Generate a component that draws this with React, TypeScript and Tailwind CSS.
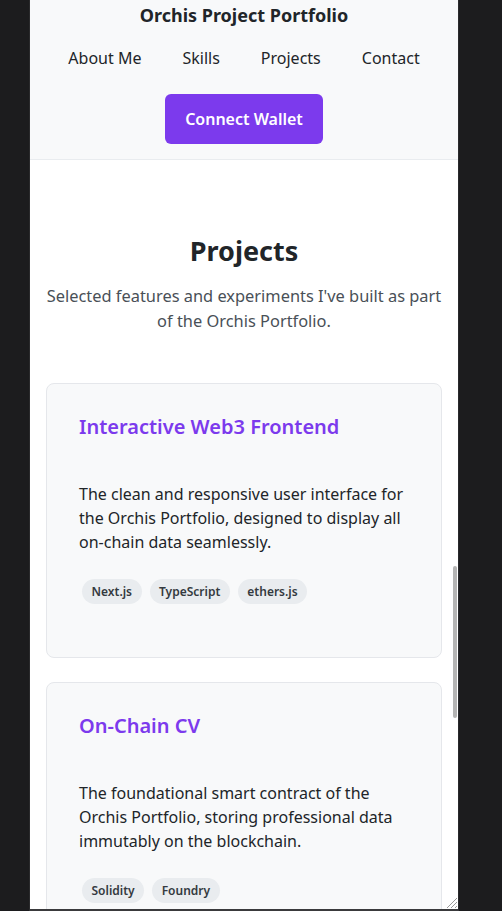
import React from "react";

const projects = [
  {
    title: "Interactive Web3 Frontend",
    desc: "The clean and responsive user interface for the Orchis Portfolio, designed to display all on-chain data seamlessly.",
    tags: ["Next.js", "TypeScript", "ethers.js"],
  },
  {
    title: "On-Chain CV",
    desc: "The foundational smart contract of the Orchis Portfolio, storing professional data immutably on the blockchain.",
    tags: ["Solidity", "Foundry"],
  },
];

function ProjectCard({ title, desc, tags }: { title: string; desc: string; tags: string[] }) {
  return (
    <div className="bg-[#f8f9fa] border border-[#e5e7eb] rounded-lg px-8 pt-[29px] pb-8">
      <h3 className="text-[20px] leading-7 font-semibold text-[#7c3aed]">{title}</h3>
      <p className="mt-[41px] text-[16px] leading-6 text-[#212529]">{desc}</p>
      <div className="mt-[25px] mb-[21px] pl-[3px] flex flex-wrap gap-2">
        {tags.map((t) => (
          <span
            key={t}
            className="h-[25px] px-[9.5px] flex items-center rounded-full bg-[#e9ecef] text-[12px] font-semibold text-[#343a40]"
          >
            {t}
          </span>
        ))}
      </div>
    </div>
  );
}

export default function App() {
  return (
    <div
      className="w-[502px] h-[911px] bg-[#1c1c1e] flex overflow-hidden"
      style={{ fontFamily: '"Noto Sans", "Open Sans", sans-serif' }}
    >
      <div className="ml-[29px] w-[430px] h-[911px] border-l border-[#2a2a2c] border-r border-b-2 border-b-[#3a3a3c] border-r-[#2a2a2c]">
        <div className="relative w-[428px] h-[909px] bg-white overflow-hidden">
          <header className="bg-[#f8f9fa] border-b border-[#e9ecef] pt-px pb-[15px] flex flex-col items-center">
            <h1 className="text-[18px] leading-7 font-bold text-[#212529]">Orchis Project Portfolio</h1>
            <nav className="mt-4 flex gap-[41px] text-[16px] leading-[26px] text-[#212529]">
              <a>About Me</a>
              <a>Skills</a>
              <a>Projects</a>
              <a>Contact</a>
            </nav>
            <button className="mt-[23px] h-[50px] px-5 rounded-md bg-[#7c3aed] text-white text-[16px] font-semibold">
              Connect Wallet
            </button>
          </header>

          <main className="px-4 pt-[73px]">
            <h2 className="text-center text-[27px] leading-9 font-bold text-[#212529]">Projects</h2>
            <p className="mt-[14px] text-center text-[16.4px] leading-[25px] text-[#495057]">
              Selected features and experiments I've built as part of the Orchis Portfolio.
            </p>
            <div className="mt-[50px] flex flex-col gap-6">
              {projects.map((p) => (
                <ProjectCard key={p.title} {...p} />
              ))}
            </div>
          </main>

          <div className="absolute right-[1px] top-[566px] w-[4px] h-[152px] rounded-full bg-[#b4b4b4]" />
          <svg className="absolute right-0 bottom-0" width="14" height="14" viewBox="0 0 14 14">
            <path d="M13 3 L3 13 M13 7 L7 13 M13 11 L11 13" stroke="#9a9a9a" strokeWidth="1" />
          </svg>
        </div>
      </div>
    </div>
  );
}
